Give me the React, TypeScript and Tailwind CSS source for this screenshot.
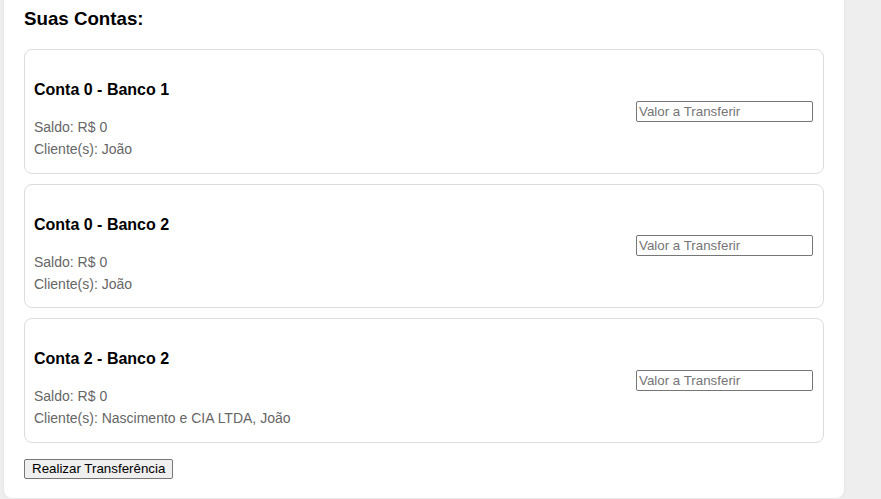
import React from "react";

const contas = [
  { titulo: "Conta 0 - Banco 1", saldo: "R$ 0", clientes: "João" },
  { titulo: "Conta 0 - Banco 2", saldo: "R$ 0", clientes: "João" },
  { titulo: "Conta 2 - Banco 2", saldo: "R$ 0", clientes: "Nascimento e CIA LTDA, João" },
];

export default function App() {
  return (
    <div
      className="w-[881px] h-[499px] bg-[#eeeeee] overflow-hidden"
      style={{ fontFamily: '"Liberation Sans", Arial, sans-serif' }}
    >
      <div className="ml-[4px] w-[840px] h-[498px] bg-white rounded-b-[8px] shadow-[0_0_4px_rgba(0,0,0,0.06)] px-[20px] pt-[8px]">
        <h2 className="text-[18.72px] leading-[22px] font-bold text-black mb-[19px]">Suas Contas:</h2>
        <div className="flex flex-col gap-[10px]">
          {contas.map((c, i) => (
            <div
              key={i}
              className="h-[124.5px] border border-[#dddddd] rounded-[8px] pl-[9px] pr-[10px] flex items-center justify-between"
            >
              <div className="flex flex-col pt-[19px]">
                <h3 className="text-[16px] leading-[18px] font-bold text-black mb-[17px]">{c.titulo}</h3>
                <p className="text-[14px] leading-[22px] text-[#666666]">Saldo: {c.saldo}</p>
                <p className="text-[14px] leading-[22px] text-[#666666]">Cliente(s): {c.clientes}</p>
              </div>
              <input
                type="text"
                placeholder="Valor a Transferir"
                className="w-[177px] h-[21px] border border-[#767676] rounded-[2px] px-[2px] text-[13.33px] text-black placeholder:text-[#757575] outline-none"
              />
            </div>
          ))}
        </div>
        <button className="mt-[16px] h-[20px] px-[7px] bg-[#efefef] border border-[#767676] rounded-[2px] text-[13.33px] leading-[16px] text-black">
          Realizar Transferência
        </button>
      </div>
    </div>
  );
}
